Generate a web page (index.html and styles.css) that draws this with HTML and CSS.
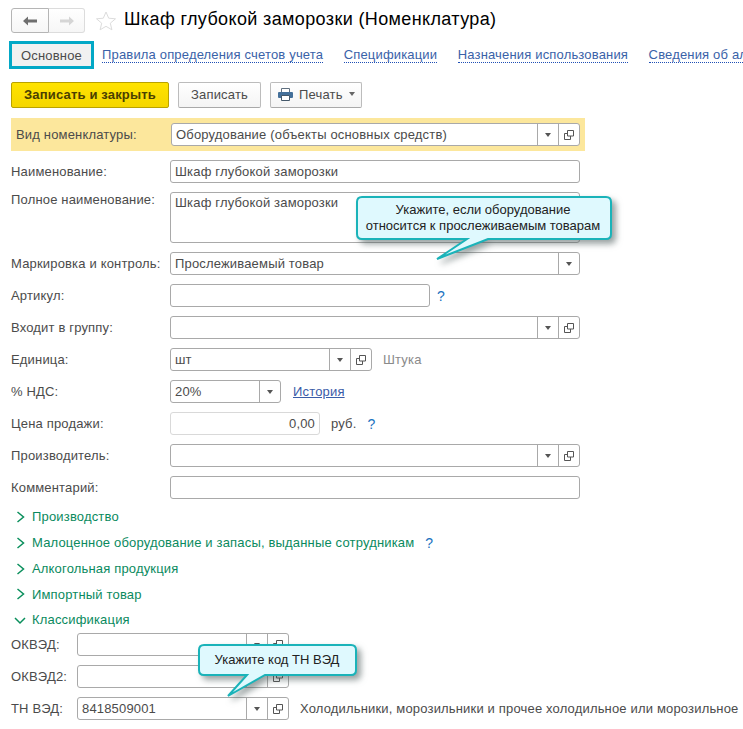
FILE: index.html
```html
<!DOCTYPE html>
<html lang="ru">
<head>
<meta charset="utf-8">
<title>Шкаф глубокой заморозки (Номенклатура)</title>
<link rel="stylesheet" href="styles.css">
</head>
<body>
<svg class="defs" width="0" height="0" aria-hidden="true">
  <symbol id="open" viewBox="0 0 10 10"><path d="M3.500 .5h6v5.500h-6z M3.500 3.500h-3v6h6v-3.500" fill="none" stroke="#555" stroke-width="1"/></symbol>
</svg>
<div class="page">
  <header class="head">
    <div class="nav">
      <button class="nav-btn back"><svg width="14" height="10" viewBox="0 0 14 10"><path d="M0 5l5-4.500v3h9v3h-9v3z" fill="#6f6f6f"/></svg></button>
      <button class="nav-btn fwd"><svg width="14" height="10" viewBox="0 0 14 10"><path d="M14 5l-5-4.500v3h-9v3h9v3z" fill="#d5d5d5"/></svg></button>
    </div>
    <svg class="star" width="20" height="20" viewBox="0 0 20 20"><path d="M10 1l2.700 6.200 6.800.6-5.200 4.400 1.600 6.600-5.900-3.500-5.900 3.500 1.600-6.600-5.200-4.400 6.800-.6z" fill="#fff" stroke="#dcdcdc"/></svg>
    <h1 class="title">Шкаф глубокой заморозки (Номенклатура)</h1>
  </header>

  <nav class="tabs">
    <span class="tab-active">Основное</span>
    <a class="tab">Правила определения счетов учета</a>
    <a class="tab">Спецификации</a>
    <a class="tab">Назначения использования</a>
    <a class="tab">Сведения об алкогольной продукции</a>
  </nav>

  <div class="toolbar">
    <button class="btn primary">Записать и закрыть</button>
    <button class="btn plain">Записать</button>
    <button class="btn print">
      <svg width="15" height="13" viewBox="0 0 15 13"><path d="M3.500 .5h8v4h-8z" fill="#fff" stroke="#5f6f7f"/><rect y="4" width="15" height="6" rx="1" fill="#44709a"/><path d="M3.500 7.500h8v5h-8z" fill="#fff" stroke="#44586a"/></svg>
      Печать <i class="caret small"></i>
    </button>
  </div>

  <div class="row band">
    <label class="label">Вид номенклатуры:</label>
    <div class="field w-band"><span class="val">Оборудование (объекты основных средств)</span><span class="cell"><i class="caret"></i></span><span class="cell"><svg class="op"><use href="#open"/></svg></span></div>
  </div>

  <div class="row"><label class="label">Наименование:</label><div class="field w-full"><span class="val">Шкаф глубокой заморозки</span></div></div>
  <div class="row tall"><label class="label">Полное наименование:</label><div class="field w-full area"><span class="val">Шкаф глубокой заморозки</span></div></div>
  <div class="row"><label class="label">Маркировка и контроль:</label><div class="field w-full"><span class="val">Прослеживаемый товар</span><span class="cell"><i class="caret"></i></span></div></div>
  <div class="row"><label class="label">Артикул:</label><div class="field w-art"></div><span class="help art-help">?</span></div>
  <div class="row"><label class="label">Входит в группу:</label><div class="field w-full"><span class="val"></span><span class="cell"><i class="caret"></i></span><span class="cell"><svg class="op"><use href="#open"/></svg></span></div></div>
  <div class="row"><label class="label">Единица:</label><div class="field w-unit"><span class="val">шт</span><span class="cell"><i class="caret"></i></span><span class="cell"><svg class="op"><use href="#open"/></svg></span></div><span class="note unit-note">Штука</span></div>
  <div class="row"><label class="label">% НДС:</label><div class="field w-vat"><span class="val">20%</span><span class="cell"><i class="caret"></i></span></div><a class="history">История</a></div>
  <div class="row"><label class="label">Цена продажи:</label><div class="field w-price light"><span class="val right">0,00</span></div><span class="rub">руб.</span><span class="help price-help">?</span></div>
  <div class="row"><label class="label">Производитель:</label><div class="field w-full"><span class="val"></span><span class="cell"><i class="caret"></i></span><span class="cell"><svg class="op"><use href="#open"/></svg></span></div></div>
  <div class="row"><label class="label">Комментарий:</label><div class="field w-full"></div></div>

  <ul class="groups">
    <li class="group"><svg class="chev" width="9" height="12" viewBox="0 0 9 12"><path d="M1.500 1l6 5-6 5" fill="none" stroke="#0a8f5c" stroke-width="1.500"/></svg>Производство</li>
    <li class="group"><svg class="chev" width="9" height="12" viewBox="0 0 9 12"><path d="M1.500 1l6 5-6 5" fill="none" stroke="#0a8f5c" stroke-width="1.500"/></svg>Малоценное оборудование и запасы, выданные сотрудникам<span class="help group-help">?</span></li>
    <li class="group"><svg class="chev" width="9" height="12" viewBox="0 0 9 12"><path d="M1.500 1l6 5-6 5" fill="none" stroke="#0a8f5c" stroke-width="1.500"/></svg>Алкогольная продукция</li>
    <li class="group"><svg class="chev" width="9" height="12" viewBox="0 0 9 12"><path d="M1.500 1l6 5-6 5" fill="none" stroke="#0a8f5c" stroke-width="1.500"/></svg>Импортный товар</li>
    <li class="group open"><svg class="chev-down" width="12" height="9" viewBox="0 0 12 9"><path d="M1 2l5 5 5-5" fill="none" stroke="#0a8f5c" stroke-width="1.500"/></svg>Классификация</li>
  </ul>

  <div class="row sub"><label class="label short">ОКВЭД:</label><div class="field w-code"><span class="val"></span><span class="cell"><i class="caret"></i></span><span class="cell"><svg class="op"><use href="#open"/></svg></span></div></div>
  <div class="row sub"><label class="label short">ОКВЭД2:</label><div class="field w-code"><span class="val"></span><span class="cell"><i class="caret"></i></span><span class="cell"><svg class="op"><use href="#open"/></svg></span></div></div>
  <div class="row sub"><label class="label short">ТН ВЭД:</label><div class="field w-code"><span class="val">8418509001</span><span class="cell"><i class="caret"></i></span><span class="cell"><svg class="op"><use href="#open"/></svg></span></div><span class="note tn-note">Холодильники, морозильники и прочее холодильное или морозильное</span></div>

  <div class="callout c1">
    <svg width="274" height="76" viewBox="0 0 274 76"><path class="bubble" d="M6 1h244q5 0 5 5v32q0 5-5 5h-118l-51 20 30-20h-105q-5 0-5-5v-32q0-5 5-5z"/></svg>
    <p class="callout-text">Укажите, если оборудование<br>относится к прослеживаемым товарам</p>
  </div>
  <div class="callout c2">
    <svg width="180" height="66" viewBox="0 0 180 66"><path class="bubble" d="M6 1h147q5 0 5 5v20q0 5-5 5h-86l-37 21 19-21h-43q-5 0-5-5v-20q0-5 5-5z"/></svg>
    <p class="callout-text">Укажите код ТН ВЭД</p>
  </div>
</div>
</body>
</html>
```

FILE: styles.css
```css
* { box-sizing: border-box; }
html, body { margin: 0; padding: 0; }
body {
  width: 743px;
  height: 729px;
  overflow: hidden;
  background: #fff;
  font-family: "Liberation Sans", Arial, sans-serif;
  font-size: 13px;
  color: #4b4b4b;
  letter-spacing: .17px;
}
.defs { position: absolute; }
.page { position: relative; width: 743px; height: 729px; padding: 8px 0 0 11px; overflow: hidden; }

.head { display: flex; align-items: center; height: 25px; }
.nav { display: flex; width: 74px; height: 25px; }
.nav-btn {
  display: flex; align-items: center; justify-content: center;
  padding: 0; height: 25px;
  background: linear-gradient(#fff, #f6f6f6);
  border: 1px solid #cfcfcf;
  border-bottom-color: #bdbdbd;
}
.back { width: 38px; border-radius: 3px 0 0 3px; border-color: #b5b5b5; }
.fwd { width: 36px; border-left: 0; border-radius: 0 3px 3px 0; border-color: #dcdcdc; }
.star { margin-left: 11px; }
.title { margin: 0 0 0 8px; font-size: 18px; font-weight: 400; color: #000; letter-spacing: .37px; line-height: 25px; position: relative; top: -1px; }

.tabs { display: flex; align-items: center; height: 28px; margin: 8px 0 0 -2px; white-space: nowrap; }
.tab-active {
  display: flex; align-items: center; justify-content: center;
  width: 85px; height: 28px; flex: none;
  border: 3px solid #03a8c6;
  background: #f1f1f1;
  color: #4b4b4b;
}
.tab { color: #3a62a8; border-bottom: 1px dotted #1f4fb5; line-height: 15px; margin-left: 20.5px; }
.tab-active + .tab { margin-left: 8px; }

.toolbar { display: flex; height: 26px; margin-top: 13px; gap: 9px; }
.btn {
  height: 26px; padding: 0 0 2px;
  font: inherit; letter-spacing: inherit;
  color: #4b4b4b;
  border: 1px solid #bcbcbc;
  border-bottom-color: #a9a9a9;
  border-radius: 2px;
  background: linear-gradient(#fff, #f4f4f4);
}
.primary { width: 158px; font-weight: 700; color: #4a4000; background: linear-gradient(#ffe300, #f5d600); border-color: #b9a200; }
.plain { width: 83px; }
.print { width: 92px; display: flex; align-items: center; gap: 6px; padding-left: 7px; }
.print .caret { margin-left: 0; }

.row { display: flex; align-items: center; height: 23px; margin-bottom: 9px; }
.band {
  height: 33px; width: 574px; margin: 10px 0 9px;
  padding-left: 5px; background: #fce79c;
}
.band .label { width: 155px; }
.label { width: 159px; flex: none; }
.short { width: 66px; }
.tall { height: 51px; align-items: flex-start; }

.field {
  display: flex; align-items: stretch;
  height: 23px; flex: none;
  background: #fff;
  border: 1px solid #a9a9a9;
  border-radius: 3px;
  color: #4b4b4b;
}
.field.light { border-color: #d9d9d9; }
.val { flex: 1; min-width: 0; padding: 0 4px; line-height: 21px; white-space: nowrap; overflow: hidden; }
.right { text-align: right; }
.area { height: 51px; }
.area .val { line-height: 19px; }
.cell { width: 21px; flex: none; display: flex; align-items: center; justify-content: center; border-left: 1px solid #a9a9a9; }
.op { width: 10px; height: 10px; }
.caret { display: block; width: 0; height: 0; border: 3.500px solid transparent; border-top: 4px solid #555; border-bottom: 0; }
.caret.small { border-top-color: #666; }

.w-band { width: 409px; }
.w-full { width: 410px; }
.w-art { width: 260px; }
.w-unit { width: 202px; }
.w-vat { width: 111px; }
.w-price { width: 150px; }
.w-code { width: 212px; }

.help { color: #1a72c0; font-size: 14px; font-weight: 400; }
.art-help { margin-left: 7px; }
.note { color: #4b4b4b; white-space: nowrap; }
.unit-note { margin-left: 11px; color: #8a8a8a; }
.history { margin-left: 12px; color: #3a5ca8; text-decoration: underline; }
.rub { margin-left: 11px; }
.price-help { margin-left: 11px; }
.tn-note { margin-left: 11px; }

.groups { list-style: none; margin: -4px 0 0; padding: 0; height: 129px; }
.group {
  position: relative;
  display: flex; align-items: center;
  height: 25.75px; padding-left: 21px;
  color: #0a8a5e;
  white-space: nowrap;
}
.chev { position: absolute; left: 5px; top: 7px; }
.chev-down { position: absolute; left: 3px; top: 9px; }
.group-help { margin-left: 11px; }
.sub { margin-bottom: 9px; }

.callout { position: absolute; }
.c1 { left: 356px; top: 196px; width: 274px; height: 76px; }
.c2 { left: 198px; top: 644px; width: 180px; height: 66px; }
.callout svg { display: block; overflow: visible; }
.bubble { fill: #dff9fe; stroke: #1ab3b9; stroke-width: 2; filter: drop-shadow(4px 4px 3px rgba(70, 85, 85, .55)); }
.callout-text { position: absolute; margin: 0; left: 0; top: 0; color: #222; text-align: center; line-height: 16px; white-space: nowrap; letter-spacing: 0; }
.c1 .callout-text { width: 254px; top: 6px; }
.c2 .callout-text { width: 158px; top: 8px; }
```
